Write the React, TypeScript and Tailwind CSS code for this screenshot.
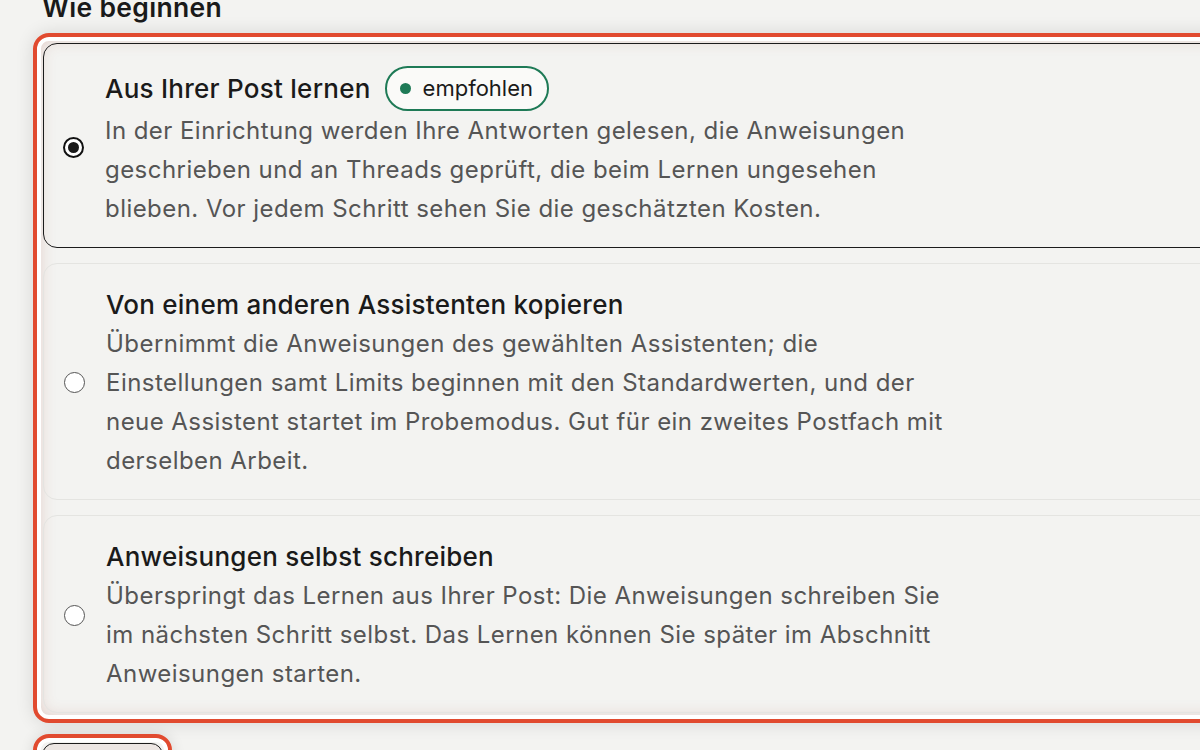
import React from 'react';

interface Option {
    id: string;
    title: string;
    text: string;
    badge?: string;
}

const options: Option[] = [
    {
        id: 'learn',
        title: 'Aus Ihrer Post lernen',
        badge: 'empfohlen',
        text: 'In der Einrichtung werden Ihre Antworten gelesen, die Anweisungen geschrieben und an Threads geprüft, die beim Lernen ungesehen blieben. Vor jedem Schritt sehen Sie die geschätzten Kosten.',
    },
    {
        id: 'copy',
        title: 'Von einem anderen Assistenten kopieren',
        text: 'Übernimmt die Anweisungen des gewählten Assistenten; die Einstellungen samt Limits beginnen mit den Standardwerten, und der neue Assistent startet im Probemodus. Gut für ein zweites Postfach mit derselben Arbeit.',
    },
    {
        id: 'manual',
        title: 'Anweisungen selbst schreiben',
        text: 'Überspringt das Lernen aus Ihrer Post: Die Anweisungen schreiben Sie im nächsten Schritt selbst. Das Lernen können Sie später im Abschnitt Anweisungen starten.',
    },
];

const Radio: React.FC<{ checked: boolean }> = ({ checked }) => (
    <span
        className={
            checked
                ? 'shrink-0 w-[21px] h-[21px] rounded-full border-[2px] border-[#111] bg-white flex items-center justify-center'
                : 'shrink-0 w-[21px] h-[21px] rounded-full border-[1.5px] border-[#555] bg-white'
        }
    >
        {checked && <span className="w-[11px] h-[11px] rounded-full bg-[#1a1a1a]"></span>}
    </span>
);

export default function App() {
    const selected = 'learn';

    return (
        <div
            className="w-[1200px] h-[750px] overflow-hidden bg-[#f3f3f1] text-[#1a1a1a]"
            style={{ fontFamily: 'Inter, "Noto Sans", sans-serif' }}
        >
            <div className="pl-[33px] w-[1260px]">
                <h2 className="mt-[-9px] ml-[9px] text-[26.5px] leading-[32px] font-semibold tracking-[0.3px] text-[#1a1a1a]">
                    Wie beginnen
                </h2>

                {/* focused radio group */}
                <div className="mt-[10px] rounded-[16px] border-[4px] border-[#e14a2f] p-[6px] shadow-[0_0_18px_rgba(0,0,0,0.12),inset_0_0_0_4px_#ffffff,inset_0_0_18px_rgba(170,70,50,0.28)] flex flex-col gap-[15px]">
                    {options.map((opt) => {
                        const checked = opt.id === selected;
                        return (
                            <label
                                key={opt.id}
                                className={
                                    checked
                                        ? 'flex items-center gap-[21px] rounded-[14px] border-[1.5px] border-[#1c1c1c] pl-[19px] pt-[22px] pb-[19px] cursor-pointer'
                                        : 'flex items-center gap-[21px] rounded-[14px] border border-[#e4e4e1] pl-[20px] pt-[21px] pb-[19px] cursor-pointer'
                                }
                            >
                                <Radio checked={checked} />
                                <div className="flex flex-col">
                                    <div className="flex items-center gap-[14px] min-h-[39px]">
                                        <span className="text-[26px] leading-[39px] font-medium tracking-[0.25px] text-[#1a1a1a]">
                                            {opt.title}
                                        </span>
                                        {opt.badge && (
                                            <span className="h-[45px] flex items-center gap-[12px] rounded-full border-[2px] border-[#1e7a56] bg-[#fafaf8] pl-[13px] pr-[14px] text-[22px] text-[#1a1a1a]">
                                                <span className="w-[11px] h-[11px] rounded-full bg-[#1e7a56]"></span>
                                                {opt.badge}
                                            </span>
                                        )}
                                    </div>
                                    <p className="max-w-[856px] text-[24px] leading-[39px] tracking-[0.45px] text-[#555555]">
                                        {opt.text}
                                    </p>
                                </div>
                            </label>
                        );
                    })}
                </div>

                {/* next button, also focused */}
                <div className="mt-[11px] w-[139px] rounded-[16px] border-[4px] border-[#e14a2f] p-[5px] shadow-[0_0_14px_rgba(0,0,0,0.12),inset_0_0_0_4px_#ffffff]">
                    <button className="w-full h-[52px] rounded-[12px] border-[1.5px] border-[#1c1c1c] bg-[#ece6e3] text-[22px] font-medium">
                        Weiter
                    </button>
                </div>
            </div>
        </div>
    );
}
